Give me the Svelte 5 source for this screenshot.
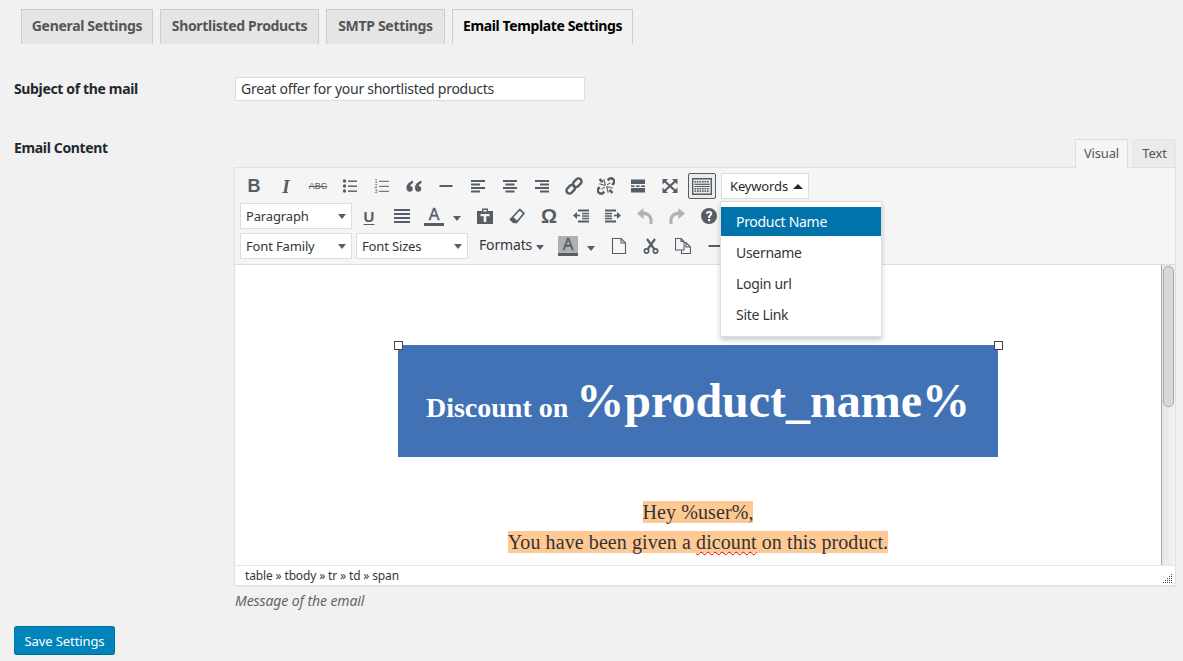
<script>
  const tabs = ['General Settings', 'Shortlisted Products', 'SMTP Settings', 'Email Template Settings'];
  const keywords = ['Product Name', 'Username', 'Login url', 'Site Link'];
  const L = (x, y, w, h = 2) => `<rect x="${x}" y="${y}" width="${w}" height="${h}"/>`;
  const dots = (y) => [2.5, 5, 7.5, 10, 12.5, 15].map((x) => L(x, y, 1.7, 1.5)).join('');
  const icons = {
    bullist: `<circle cx="2.5" cy="3" r="1.7"/><circle cx="2.5" cy="8" r="1.7"/><circle cx="2.5" cy="13" r="1.7"/>` + L(6, 2.5, 9, 1.4) + L(6, 7.5, 9, 1.4) + L(6, 12.5, 9, 1.4),
    numlist: `<text x="0.5" y="5" font-size="5.5" font-family="Liberation Sans">1</text><text x="0.5" y="10" font-size="5.5" font-family="Liberation Sans">2</text><text x="0.5" y="15" font-size="5.5" font-family="Liberation Sans">3</text>` + L(5, 2.8, 10, 1) + L(5, 7.8, 10, 1) + L(5, 12.8, 10, 1),
    quote: `<path d="M7 2.5C3.600 3.800.5 6 .5 10c0 2.300 1.400 3.700 3.300 3.700 1.700 0 3-1.300 3-3 0-1.600-1.100-2.800-2.600-2.800.3-1.300 1.600-2.400 2.800-3ZM15.500 2.500C12.100 3.800 9 6 9 10c0 2.300 1.400 3.700 3.300 3.700 1.700 0 3-1.300 3-3 0-1.600-1.100-2.800-2.600-2.800.3-1.300 1.600-2.400 2.800-3Z"/>`,
    hr: L(1.5, 7, 13, 2),
    left: L(1, 2, 14) + L(1, 5.5, 9) + L(1, 9, 14) + L(1, 12.5, 9),
    center: L(1, 2, 14) + L(3.5, 5.5, 9) + L(1, 9, 14) + L(3.5, 12.5, 9),
    right: L(1, 2, 14) + L(6, 5.5, 9) + L(1, 9, 14) + L(6, 12.5, 9),
    link: `<g fill="none" stroke="currentColor" stroke-width="2.2"><rect x="-4.800" y="-2.700" width="8.500" height="5.400" rx="2.700" transform="translate(5.500 10.500) rotate(-45)"/><rect x="-3.700" y="-2.700" width="8.500" height="5.400" rx="2.700" transform="translate(10.500 5.500) rotate(-45)"/></g>`,
    unlink: `<g fill="none" stroke="currentColor" stroke-width="2.200"><path d="M6.500 13 5.200 14.300a2.900 2.900 0 0 1-4-4l1.300-1.300"/><path d="M9.500 3 10.800 1.700a2.900 2.900 0 0 1 4 4L13.500 7"/><path d="M2.200 1.800 5 4.500M13.800 14.200 11 11.500"/></g><g fill="none" stroke="currentColor" stroke-width="1"><path d="M7.500 7.500 2 6M7.500 7.500 6 2M8.500 8.500 14 10M8.500 8.500 10 14M9 7l3-2M7 9l-3 2"/></g>`,
    more: L(1, 1.5, 14, 4.5) + L(1, 7.4, 3.6, 1.6) + L(6, 7.4, 3.6, 1.6) + L(11, 7.4, 4, 1.6) + L(1, 10, 14, 4.5),
    full: `<path d="M.5 1h5.500L.5 6.500ZM15.500 1v5.500L10 1ZM15.500 15H10l5.500-5.500ZM.5 15V9.500L6 15Z"/><path d="M2.500 3l11 10M13.500 3l-11 10" fill="none" stroke="currentColor" stroke-width="2.200"/>`,
    kitchen: `<path fill-rule="evenodd" d="M0 0h20v17H0ZM1.400 1.400v14.200h17.200V1.400Z"/>` + dots(3) + L(2.5, 5.7, 15.2, 1.2) + L(2.5, 8, 15.2, 1) + dots(10) + dots(12.4),
    justify: L(0, 1, 16) + L(0, 5, 16) + L(0, 9, 16) + L(0, 13, 16),
    paste: `<path fill-rule="evenodd" d="M0 3h5V.5h6V3h5v13H0ZM6.300 2v1.500h3.400V2ZM3.500 6v2.300h3.200V14h2.600V8.300h3.200V6Z"/>`,
    eraser: `<path fill="none" stroke="currentColor" stroke-width="1.700" stroke-linejoin="round" d="M10.700 1.500 15 5.300 7.500 14.500H5L1.500 11.500Z"/><path d="M1.500 11.500 5 14.500H7.500L8.800 13 3.700 8.800Z"/>`,
    outdent: L(5, 1.5, 11) + L(9, 4.8, 7, 1.5) + L(9, 7.3, 7, 1.5) + L(9, 9.8, 7, 1.5) + L(5, 12.5, 11) + `<path d="M0 7.500 4 4v7Z"/>` + L(3.5, 6.7, 3.5, 1.6),
    indent: L(0, 1.5, 11) + L(0, 4.8, 7, 1.5) + L(0, 7.3, 7, 1.5) + L(0, 9.8, 7, 1.5) + L(0, 12.5, 11) + `<path d="M16 7.500 12 4v7Z"/>` + L(9, 6.7, 3.5, 1.6),
    undo: `<path d="M0 5.500 6.500 0v3.400C11.500 3.800 15.500 7 15.500 12v4h-3v-3.800c0-3.200-2.500-5-6-5.300V11Z"/>`,
    redo: `<path d="M16 5.500 9.500 0v3.400C4.500 3.800.5 7 .5 12v4h3v-3.800c0-3.200 2.500-5 6-5.300V11Z"/>`,
    help: `<path fill-rule="evenodd" d="M8 0a8 8 0 1 1 0 16A8 8 0 0 1 8 0ZM7 11v2.300h2.300V11ZM8.100 2.800C6.300 2.800 5 3.800 4.800 5.600l2.100.3c.1-.8.500-1.200 1.100-1.200.6 0 1 .4 1 1 0 1.200-2 1.500-2 3.700v.5h2.200v-.3c0-1.400 2.100-1.800 2.100-4 0-1.800-1.300-2.800-3.200-2.800Z"/>`,
    doc: `<path fill="none" stroke="currentColor" stroke-width="1.100" d="M1.500 .5h8.500l4.500 4.500v10.500h-13ZM10 .5V5h4.500"/>`,
    cut: `<g fill="none" stroke="currentColor" stroke-width="1.700"><circle cx="3.500" cy="13" r="2.200"/><circle cx="12.500" cy="13" r="2.200"/><path d="M4.800 11 12 1M11.200 11 4 1" stroke-width="2.200"/></g>`,
    copy: `<path fill="none" stroke="currentColor" stroke-width="1.100" d="M.5 .5h5.500l3 3V12H.5ZM6 .5v3h3M9 4.500h2l4.500 4.500v6.500H6.500V12M11 4.500V9h4.500"/>`
  };
  const row1 = ['quote', 'hr', 'left', 'center', 'right', 'link', 'unlink', 'more', 'full'];
  const row2 = ['paste', 'eraser', 'omega', 'outdent', 'indent', 'undo', 'redo', 'help'];
</script>

{#snippet svg(name, cls = '')}
  <svg class="ico {cls}" viewBox="0 0 16 16" fill="currentColor" aria-hidden="true">{@html icons[name]}</svg>
{/snippet}

{#snippet select(label)}
  <div class="select"><span>{label}</span><i class="caret down"></i></div>
{/snippet}

<div class="page">
  <nav class="tabs">
    {#each tabs as t, i}
      <span class="tab" class:active={i === 3}>{t}</span>
    {/each}
  </nav>

  <div class="form">
    <div class="label">Subject of the mail</div>
    <div class="input">Great offer for your shortlisted products</div>

    <div class="label second">Email Content</div>
    <div class="field">
      <div class="modes">
        <span class="mode on">Visual</span>
        <span class="mode">Text</span>
      </div>
      <div class="editor">
        <div class="toolbar">
          <div class="row">
            <span class="btn"><b class="g bold">B</b></span>
            <span class="btn"><b class="g ital">I</b></span>
            <span class="btn"><span class="g abc">ABC</span></span>
            <span class="btn">{@render svg('bullist')}</span>
            <span class="btn">{@render svg('numlist')}</span>
            {#each row1 as n}
              <span class="btn">{@render svg(n, n === 'link' || n === 'unlink' ? 'lg' : '')}</span>
            {/each}
            <span class="btn"><span class="toggle"><svg class="kb" viewBox="0 0 20 17" fill="currentColor" aria-hidden="true">{@html icons.kitchen}</svg></span></span>
            <span class="kw">Keywords <i class="caret up"></i></span>
          </div>
          <div class="row">
            {@render select('Paragraph')}
            <span class="btn first"><span class="g u">U</span></span>
            <span class="btn">{@render svg('justify')}</span>
            <span class="btn"><span class="g color">A</span></span>
            <span class="split"><i class="caret down"></i></span>
            {#each row2 as n}
              <span class="btn" class:dim={n === 'undo' || n === 'redo'}>
                {#if n === 'omega'}<span class="g omega">Ω</span>{:else}{@render svg(n)}{/if}
              </span>
            {/each}
          </div>
          <div class="row">
            {@render select('Font Family')}
            {@render select('Font Sizes')}
            <span class="formats">Formats <i class="caret down"></i></span>
            <span class="btn"><span class="g color hl">A</span></span>
            <span class="split"><i class="caret down"></i></span>
            <span class="btn">{@render svg('doc')}</span>
            <span class="btn">{@render svg('cut')}</span>
            <span class="btn">{@render svg('copy')}</span>
            <span class="btn">{@render svg('hr')}</span>
          </div>
          <ul class="menu">
            {#each keywords as k, i}
              <li class:sel={i === 0}>{k}</li>
            {/each}
          </ul>
        </div>

        <div class="body">
          <div class="doc">
            <div class="banner">
              <i class="handle tl"></i><i class="handle tr"></i>
              <span class="small">Discount on</span><span class="big">%product_name%</span>
            </div>
            <p class="msg"><span>Hey %user%,</span><br /><span>You have been given a <u>dicount</u> on this product.</span></p>
          </div>
          <div class="scroll"><div class="thumb"></div></div>
        </div>

        <div class="status">
          <span>table » tbody » tr » td » span</span>
          <svg class="grip" width="10" height="10" viewBox="0 0 10 10" fill="#444" aria-hidden="true">
            <rect x="8" y="0" width="1" height="1"/><rect x="6" y="2" width="1" height="1"/><rect x="8" y="2" width="1" height="1"/><rect x="4" y="4" width="1" height="1"/><rect x="6" y="4" width="1" height="1"/><rect x="8" y="4" width="1" height="1"/><rect x="2" y="6" width="1" height="1"/><rect x="4" y="6" width="1" height="1"/><rect x="6" y="6" width="1" height="1"/><rect x="8" y="6" width="1" height="1"/><rect x="0" y="8" width="1" height="1"/><rect x="2" y="8" width="1" height="1"/><rect x="4" y="8" width="1" height="1"/><rect x="6" y="8" width="1" height="1"/><rect x="8" y="8" width="1" height="1"/>
          </svg>
        </div>
      </div>
      <div class="hint">Message of the email</div>
    </div>
  </div>

  <button class="save">Save Settings</button>
</div>

<style>
  :global(body) {
    background: #f1f1f1;
    font-family: "Noto Sans", "Open Sans", sans-serif;
    color: #444;
    overflow: hidden;
  }
  .page {
    height: 661px;
    box-sizing: border-box;
    padding: 9px 7px 0 14px;
    font-size: 13.5px;
    letter-spacing: -0.15px;
  }
  .tabs {
    display: grid;
    grid-template-columns: 132px 159px 119px 181px;
    gap: 7px;
    padding-left: 7px;
  }
  .tab {
    box-sizing: border-box;
    height: 35px;
    line-height: 32px;
    text-align: center;
    border: 1px solid #ccc;
    border-bottom: 0;
    background: #e5e5e5;
    color: #555;
    font-weight: 700;
    font-size: 14px;
    letter-spacing: -0.32px;
    white-space: nowrap;
  }
  .tab.active {
    background: #f1f1f1;
    color: #000;
    letter-spacing: -0.38px;
  }
  .form {
    display: grid;
    grid-template-columns: 220px 1fr;
    margin-top: 33px;
    row-gap: 38px;
  }
  .label {
    font-weight: 700;
    font-size: 14px;
    letter-spacing: -0.35px;
    color: #23282d;
    line-height: 24px;
  }
  .label.second {
    line-height: 18px;
  }
  .input {
    box-sizing: border-box;
    margin-left: 1px;
    width: 350px;
    height: 24px;
    line-height: 22px;
    padding: 0 5px;
    background: #fff;
    border: 1px solid #ddd;
    color: #32373c;
    font-size: 14px;
    letter-spacing: -0.27px;
  }
  .field {
    min-width: 0;
  }
  .modes {
    display: grid;
    grid-template-columns: 53px 43px;
    justify-content: end;
    gap: 5px;
    height: 28px;
    position: relative;
    z-index: 1;
  }
  .mode {
    box-sizing: border-box;
    height: 28px;
    line-height: 27px;
    text-align: center;
    background: #ebebeb;
    border: 1px solid #e5e5e5;
    border-bottom: 0;
    color: #555;
    font-size: 13px;
  }
  .mode.on {
    height: 29px;
    background: #f5f5f5;
    border-color: #ddd;
  }
  .editor {
    border: 1px solid #e0e0e0;
    box-shadow: 0 1px 1px rgba(0, 0, 0, 0.04);
    background: #fff;
  }
  .toolbar {
    position: relative;
    box-sizing: border-box;
    height: 97px;
    padding: 3px 0 3px 3px;
    background: #f5f5f5;
    border-bottom: 1px solid #ddd;
    color: #555d66;
  }
  .row {
    display: flex;
    align-items: center;
    height: 30px;
  }
  .row:nth-child(n + 2) {
    padding-left: 2px;
  }
  .btn {
    flex: none;
    width: 32px;
    height: 26px;
    display: flex;
    align-items: center;
    justify-content: center;
  }
  .btn.first {
    margin-left: 2px;
  }
  .dim {
    color: #aeb3b8;
  }
  .ico {
    width: 16px;
    height: 16px;
    display: block;
  }
  .ico.lg {
    width: 18px;
    height: 18px;
  }
  .toggle {
    box-sizing: border-box;
    width: 28px;
    height: 26px;
    display: flex;
    align-items: center;
    justify-content: center;
    background: #ebebeb;
    border: 1px solid #555d66;
    border-radius: 2px;
  }
  .kb {
    width: 20px;
    height: 17px;
    display: block;
  }
  .g {
    font-family: "Liberation Sans", sans-serif;
    letter-spacing: 0;
    line-height: 1;
  }
  .bold {
    font-size: 18px;
  }
  .ital {
    font-size: 19px;
    font-style: italic;
    font-family: "Liberation Serif", serif;
  }
  .abc {
    font-size: 9px;
    text-decoration: line-through;
  }
  .u {
    font-size: 15px;
    font-weight: 700;
    text-decoration: underline;
    text-underline-offset: 2px;
    margin-left: -2px;
  }
  .color {
    display: block;
    width: 20px;
    height: 20px;
    box-sizing: border-box;
    text-align: center;
    font-size: 16px;
    line-height: 17px;
    border-bottom: 3px solid #555d66;
    font-weight: 400;
    -webkit-text-stroke: 0.4px currentColor;
  }
  .hl {
    background: #b0b0b0;
  }
  .omega {
    font-size: 20px;
    font-weight: 700;
  }
  .split {
    flex: none;
    width: 19px;
    padding-left: 3px;
    box-sizing: border-box;
  }
  .caret {
    display: inline-block;
    width: 0;
    height: 0;
    border-left: 4px solid transparent;
    border-right: 4px solid transparent;
  }
  .caret.down {
    border-top: 5px solid #555d66;
  }
  .caret.up {
    border-left-width: 5px;
    border-right-width: 5px;
    border-bottom: 5px solid #23282d;
    margin-left: 2px;
    vertical-align: 2px;
  }
  .select {
    flex: none;
    box-sizing: border-box;
    width: 112px;
    height: 26px;
    padding: 0 5px;
    display: flex;
    align-items: center;
    justify-content: space-between;
    background: #fff;
    border: 1px solid #ddd;
    color: #32373c;
    font-size: 13px;
  }
  .select + .select {
    margin-left: 4px;
  }
  .kw {
    flex: none;
    box-sizing: border-box;
    width: 88px;
    height: 26px;
    margin-left: 3px;
    padding-left: 8px;
    line-height: 24px;
    background: #fff;
    border: 1px solid #ddd;
    color: #23282d;
    font-size: 13px;
    white-space: nowrap;
  }
  .formats {
    flex: none;
    box-sizing: border-box;
    width: 84px;
    padding-left: 11px;
    color: #32373c;
    font-size: 14px;
    white-space: nowrap;
    margin-top: -3px;
  }
  .menu {
    position: absolute;
    left: 485px;
    top: 33px;
    box-sizing: border-box;
    width: 162px;
    height: 136px;
    margin: 0;
    padding: 5px 0 0;
    list-style: none;
    background: #fff;
    border: 1px solid #ddd;
    box-shadow: 0 3px 5px rgba(0, 0, 0, 0.2);
    z-index: 5;
    color: #32373c;
    font-size: 14px;
    letter-spacing: -0.3px;
  }
  .menu li {
    height: 29px;
    line-height: 29px;
    padding-left: 15px;
    margin-bottom: 2px;
  }
  .menu li.sel {
    background: #0073aa;
    color: #fff;
  }
  .body {
    display: flex;
    height: 300px;
    overflow: hidden;
  }
  .doc {
    flex: 1;
    min-width: 0;
    padding-top: 80px;
    display: flex;
    flex-direction: column;
    align-items: center;
    font-family: "Liberation Serif", serif;
    letter-spacing: 0;
  }
  .banner {
    position: relative;
    width: 600px;
    height: 112px;
    background: #4172b5;
    color: #fff;
    display: flex;
    align-items: baseline;
    justify-content: center;
    gap: 8px;
    font-weight: 700;
    line-height: 112px;
  }
  .small {
    font-size: 28px;
  }
  .big {
    font-size: 48px;
  }
  .handle {
    position: absolute;
    top: -4px;
    width: 7px;
    height: 7px;
    background: #fff;
    border: 1px solid #444;
  }
  .tl {
    left: -4px;
  }
  .tr {
    right: -5px;
  }
  .msg {
    margin: 40px 0 0;
    font-size: 20px;
    line-height: 30px;
    text-align: center;
    color: #333;
    letter-spacing: 0.09px;
  }
  .msg span {
    background: #ffc993;
  }
  .msg u {
    text-decoration: underline wavy #e00;
    text-decoration-thickness: 1px;
    text-underline-offset: 2px;
  }
  .scroll {
    flex: none;
    width: 14px;
    box-sizing: border-box;
    background: linear-gradient(90deg, #e6e6e6, #f2f2f2);
    border-left: 1px solid #aaa;
    padding: 1px 1px 0 1px;
  }
  .thumb {
    height: 141px;
    box-sizing: border-box;
    background: #d8d8d8;
    border: 1px solid #aaa;
    border-radius: 5px;
  }
  .status {
    box-sizing: border-box;
    height: 20px;
    padding: 0 0 0 10px;
    display: flex;
    align-items: center;
    justify-content: space-between;
    border-top: 1px solid #e5e5e5;
    color: #32373c;
    font-size: 12px;
  }
  .grip {
    margin: 6px 2px 0 0;
  }
  .hint {
    margin: 6px 0 0 1px;
    font-style: italic;
    color: #666;
    font-size: 14px;
    line-height: 18px;
    letter-spacing: -0.1px;
  }
  .save {
    display: block;
    box-sizing: border-box;
    margin-top: 16px;
    width: 101px;
    height: 29px;
    padding: 0;
    background: #0085ba;
    border: 1px solid #0073aa;
    border-bottom-color: #006799;
    border-radius: 3px;
    color: #fff;
    font: 13px "Noto Sans", sans-serif;
    letter-spacing: -0.1px;
  }
</style>
